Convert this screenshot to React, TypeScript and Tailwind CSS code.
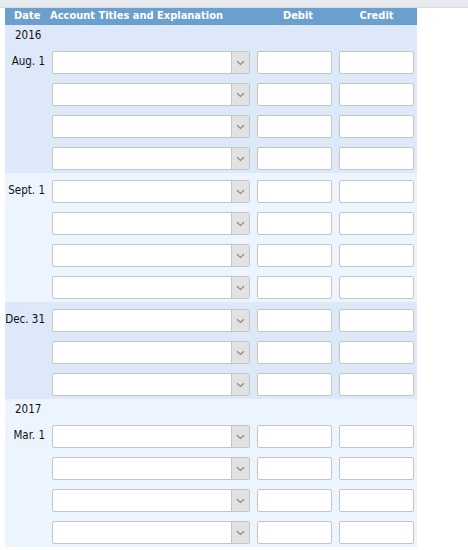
import React from "react";

const font = { fontFamily: "'DejaVu Sans Condensed', 'DejaVu Sans', sans-serif" };

function SelectBox() {
  return (
    <div className="flex h-[23px] w-[198px] rounded-[2px] border border-[#c5c5c5] bg-white overflow-hidden">
      <div className="flex-1" />
      <div className="flex w-[18px] items-center justify-center border-l border-[#c5c5c5] bg-[#e2e2e2]">
        <svg width="9" height="6" viewBox="0 0 9 6">
          <path d="M1 1.2 L4.5 4.5 L8 1.2" fill="none" stroke="#8a8a8a" strokeWidth="1.2" />
        </svg>
      </div>
    </div>
  );
}

function TextBox() {
  return <div className="h-[23px] w-[75px] rounded-[2px] border border-[#c5c5c5] bg-white" />;
}

function Row({ label }: { label?: string }) {
  return (
    <div className="flex h-[32px] items-start pt-[7px]">
      <div className="flex h-[23px] w-[47px] items-center justify-end pr-[7px] pb-[2px] text-[11.5px] text-[#111] whitespace-nowrap">
        {label ?? ""}
      </div>
      <SelectBox />
      <div className="ml-[7px]">
        <TextBox />
      </div>
      <div className="ml-[7px]">
        <TextBox />
      </div>
    </div>
  );
}

function Section({
  dark,
  year,
  label,
  rows,
}: {
  dark: boolean;
  year?: string;
  label: string;
  rows: number;
}) {
  return (
    <div className={dark ? "bg-[#dde8f8] pb-px" : "bg-[#ecf4fe] pb-px"}>
      {year && (
        <div className="flex h-[19px] items-center pl-[10px] pt-[2px] text-[11.5px] text-[#111]">{year}</div>
      )}
      {Array.from({ length: rows }).map((_, i) => (
        <Row key={i} label={i === 0 ? label : undefined} />
      ))}
    </div>
  );
}

export default function App() {
  return (
    <div className="w-[468px] h-[550px] overflow-hidden bg-white" style={font}>
      <div className="h-[8px] border-b border-[#d6dadf] bg-[#e6e9ed]" />
      <div className="ml-[5px] w-[412px]">
        <div className="flex h-[17px] items-center bg-[#6a9fce] text-[11px] font-bold text-white">
          <div className="w-[45px] pl-[9px]">Date</div>
          <div className="w-[207px]">Account Titles and Explanation</div>
          <div className="w-[82px] text-center">Debit</div>
          <div className="w-[75px] text-center">Credit</div>
        </div>
        <Section dark year="2016" label="Aug. 1" rows={4} />
        <Section dark={false} label="Sept. 1" rows={4} />
        <Section dark label="Dec. 31" rows={3} />
        <Section dark={false} year="2017" label="Mar. 1" rows={4} />
      </div>
    </div>
  );
}
